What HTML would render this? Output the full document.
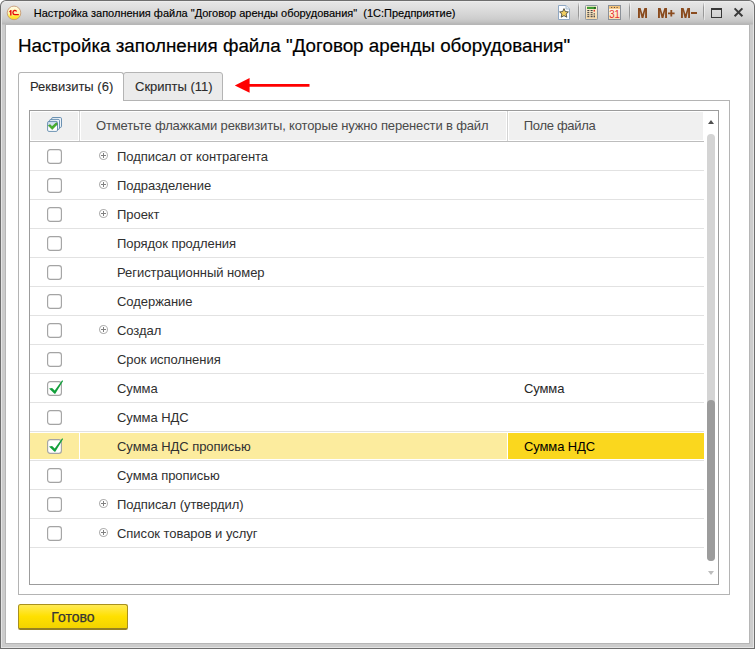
<!DOCTYPE html>
<html><head><meta charset="utf-8">
<style>
*{margin:0;padding:0;box-sizing:border-box}
html,body{width:755px;height:649px;overflow:hidden;background:#fff;font-family:"Liberation Sans",sans-serif}
.a{position:absolute}
.t{position:absolute;white-space:pre}
</style></head><body>
<div class="a" style="left:0;top:0;width:755px;height:649px;border-radius:6px 6px 0 0;background:#6e6e6e"></div>
<div class="a" style="left:1px;top:1px;width:753px;height:647px;border-radius:5px 5px 0 0;background:#e4e4e4"></div>
<div class="a" style="left:2px;top:1px;width:751px;height:646px;border-radius:5px 5px 0 0;background:linear-gradient(#f3f3f3 0px,#e6e6e6 1px,#dddddd 8px,#cdcdcd 18px,#c2c2c2 21px,#b6b6b6 23px,#cccccc 24px)"></div>
<div class="a" style="left:5px;top:24px;width:745px;height:620px;background:#b6b6b6"></div>
<div class="a" style="left:6px;top:25px;width:743px;height:618px;background:#fff"></div>
<div class="t" style="left:33.8px;top:7.69px;font-size:11px;line-height:11px;height:11px;color:#000;-webkit-text-stroke:0.15px #000">Настройка заполнения файла "Договор аренды оборудования"  (1С:Предприятие)</div>
<svg class="a" style="left:0;top:0" width="26" height="24" viewBox="0 0 26 24">
<defs><linearGradient id="lg1" x1="0" y1="0" x2="0" y2="1"><stop offset="0" stop-color="#fffbe8"/><stop offset="0.55" stop-color="#fff4a8"/><stop offset="0.75" stop-color="#ffe83a"/><stop offset="1" stop-color="#ffd820"/></linearGradient></defs>
<circle cx="14" cy="12.9" r="6.8" fill="url(#lg1)" stroke="#c69a78" stroke-width="0.9"/>
<path d="M9.2 11.4 L10.5 10 L11.5 10 L11.5 15.6 L10.1 15.6 L10.1 11.9 L9.2 12.3 Z" fill="#e60a0a"/>
<path d="M16.6 11.5 Q15.8 10.3 14.4 10.5 Q12.9 10.9 12.9 12.6 Q13 14.6 14.8 14.7 L18.8 14.7" fill="none" stroke="#e60a0a" stroke-width="1.3"/>
</svg>
<div class="t" style="left:18px;top:37.39px;font-size:18.8px;line-height:18.8px;height:18.8px;color:#000;-webkit-text-stroke:0.2px #000">Настройка заполнения файла "Договор аренды оборудования"</div>
<div class="a" style="left:18px;top:100px;width:712px;height:495px;border:1px solid #b4b4b4"></div>
<div class="a" style="left:123px;top:72px;width:100px;height:29px;border:1px solid #b4b4b4;border-radius:3px 3px 0 0;background:#ebebeb"></div>
<div class="a" style="left:18px;top:72px;width:106px;height:29px;border:1px solid #b4b4b4;border-bottom:none;border-radius:3px 3px 0 0;background:#fff"></div>
<div class="t" style="left:30px;top:79.50px;font-size:13px;line-height:13px;height:13px;color:#2a2a2a;-webkit-text-stroke:0.1px #2a2a2a">Реквизиты (6)</div>
<div class="t" style="left:135px;top:79.50px;font-size:13px;line-height:13px;height:13px;color:#2a2a2a;-webkit-text-stroke:0.1px #2a2a2a">Скрипты (11)</div>
<svg class="a" style="left:230px;top:74px" width="85" height="24" viewBox="0 0 85 24"><path d="M4.8 11.4 L19.6 4.1 L19.6 10 L79.5 10 L79.5 12.8 L19.6 12.8 L19.6 18.8 Z" fill="#ff0000"/></svg>
<div class="a" style="left:29px;top:110px;width:690px;height:475px;border:1px solid #9c9c9c"></div>
<div class="a" style="left:31px;top:112px;width:47px;height:28px;background:#f0f0f0"></div>
<div class="a" style="left:79px;top:111px;width:1px;height:30px;background:#d4d4d4"></div>
<div class="a" style="left:81px;top:112px;width:425px;height:28px;background:#f0f0f0"></div>
<div class="a" style="left:507px;top:111px;width:1px;height:30px;background:#d4d4d4"></div>
<div class="a" style="left:509px;top:112px;width:194px;height:28px;background:#f0f0f0"></div>
<div class="a" style="left:30px;top:141px;width:674px;height:1px;background:#bdbdbd"></div>
<div class="t" style="left:96px;top:119.00px;font-size:13px;line-height:13px;height:13px;color:#4a4a4a;letter-spacing:-0.14px">Отметьте флажками реквизиты, которые нужно перенести в файл</div>
<div class="t" style="left:523.8px;top:119.00px;font-size:13px;line-height:13px;height:13px;color:#4a4a4a;letter-spacing:-0.32px">Поле файла</div>
<svg class="a" style="left:46px;top:116px" width="17" height="17" viewBox="0 0 17 17">
<defs><linearGradient id="hb" x1="0" y1="0" x2="0" y2="1"><stop offset="0" stop-color="#c2d6ea"/><stop offset="0.45" stop-color="#dfeaf4"/><stop offset="0.5" stop-color="#ffffff"/><stop offset="1" stop-color="#ffffff"/></linearGradient></defs>
<rect x="5.6" y="1.5" width="9.9" height="10" rx="1.3" fill="#eef3f8" stroke="#5b86aa" stroke-width="0.9"/>
<rect x="3.6" y="3.4" width="9.9" height="10" rx="1.3" fill="#eef3f8" stroke="#5b86aa" stroke-width="0.9"/>
<rect x="1.6" y="5.4" width="9.9" height="10" rx="1.3" fill="url(#hb)" stroke="#5b86aa" stroke-width="0.9"/>
<path d="M2.2 9.6 L4.2 8.6 L6 10.6 L10.4 6.6 L11.4 8.2 L6.2 13.6 Z" fill="#47b02c" stroke="#2d8a1c" stroke-width="0.5" stroke-linejoin="round"/>
</svg>
<div class="a" style="left:30px;top:170px;width:674px;height:1px;background:#e2e2e2"></div>
<svg class="a" style="left:47px;top:149px" width="15" height="15" viewBox="0 0 15 15"><rect x="0.6" y="0.6" width="13.8" height="13.8" rx="2.6" fill="#fff" stroke="#a4a4a4" stroke-width="1.15"/></svg>
<svg class="a" style="left:98px;top:150px" width="11" height="11" viewBox="0 0 11 11"><circle cx="5.5" cy="5.5" r="4" fill="none" stroke="#b2b2b2" stroke-width="1.05"/><path d="M3 5.5 H8 M5.5 3 V8" stroke="#808080" stroke-width="1"/></svg>
<div class="t" style="left:117px;top:150.00px;font-size:13px;line-height:13px;height:13px;color:#303030;letter-spacing:-0.05px">Подписал от контрагента</div>
<div class="a" style="left:30px;top:199px;width:674px;height:1px;background:#e2e2e2"></div>
<svg class="a" style="left:47px;top:178px" width="15" height="15" viewBox="0 0 15 15"><rect x="0.6" y="0.6" width="13.8" height="13.8" rx="2.6" fill="#fff" stroke="#a4a4a4" stroke-width="1.15"/></svg>
<svg class="a" style="left:98px;top:179px" width="11" height="11" viewBox="0 0 11 11"><circle cx="5.5" cy="5.5" r="4" fill="none" stroke="#b2b2b2" stroke-width="1.05"/><path d="M3 5.5 H8 M5.5 3 V8" stroke="#808080" stroke-width="1"/></svg>
<div class="t" style="left:117px;top:179.00px;font-size:13px;line-height:13px;height:13px;color:#303030;letter-spacing:-0.05px">Подразделение</div>
<div class="a" style="left:30px;top:228px;width:674px;height:1px;background:#e2e2e2"></div>
<svg class="a" style="left:47px;top:207px" width="15" height="15" viewBox="0 0 15 15"><rect x="0.6" y="0.6" width="13.8" height="13.8" rx="2.6" fill="#fff" stroke="#a4a4a4" stroke-width="1.15"/></svg>
<svg class="a" style="left:98px;top:208px" width="11" height="11" viewBox="0 0 11 11"><circle cx="5.5" cy="5.5" r="4" fill="none" stroke="#b2b2b2" stroke-width="1.05"/><path d="M3 5.5 H8 M5.5 3 V8" stroke="#808080" stroke-width="1"/></svg>
<div class="t" style="left:117px;top:208.00px;font-size:13px;line-height:13px;height:13px;color:#303030;letter-spacing:-0.05px">Проект</div>
<div class="a" style="left:30px;top:257px;width:674px;height:1px;background:#e2e2e2"></div>
<svg class="a" style="left:47px;top:236px" width="15" height="15" viewBox="0 0 15 15"><rect x="0.6" y="0.6" width="13.8" height="13.8" rx="2.6" fill="#fff" stroke="#a4a4a4" stroke-width="1.15"/></svg>
<div class="t" style="left:117px;top:237.00px;font-size:13px;line-height:13px;height:13px;color:#303030;letter-spacing:-0.05px">Порядок продления</div>
<div class="a" style="left:30px;top:286px;width:674px;height:1px;background:#e2e2e2"></div>
<svg class="a" style="left:47px;top:265px" width="15" height="15" viewBox="0 0 15 15"><rect x="0.6" y="0.6" width="13.8" height="13.8" rx="2.6" fill="#fff" stroke="#a4a4a4" stroke-width="1.15"/></svg>
<div class="t" style="left:117px;top:266.00px;font-size:13px;line-height:13px;height:13px;color:#303030;letter-spacing:-0.05px">Регистрационный номер</div>
<div class="a" style="left:30px;top:315px;width:674px;height:1px;background:#e2e2e2"></div>
<svg class="a" style="left:47px;top:294px" width="15" height="15" viewBox="0 0 15 15"><rect x="0.6" y="0.6" width="13.8" height="13.8" rx="2.6" fill="#fff" stroke="#a4a4a4" stroke-width="1.15"/></svg>
<div class="t" style="left:117px;top:295.00px;font-size:13px;line-height:13px;height:13px;color:#303030;letter-spacing:-0.05px">Содержание</div>
<div class="a" style="left:30px;top:344px;width:674px;height:1px;background:#e2e2e2"></div>
<svg class="a" style="left:47px;top:323px" width="15" height="15" viewBox="0 0 15 15"><rect x="0.6" y="0.6" width="13.8" height="13.8" rx="2.6" fill="#fff" stroke="#a4a4a4" stroke-width="1.15"/></svg>
<svg class="a" style="left:98px;top:324px" width="11" height="11" viewBox="0 0 11 11"><circle cx="5.5" cy="5.5" r="4" fill="none" stroke="#b2b2b2" stroke-width="1.05"/><path d="M3 5.5 H8 M5.5 3 V8" stroke="#808080" stroke-width="1"/></svg>
<div class="t" style="left:117px;top:324.00px;font-size:13px;line-height:13px;height:13px;color:#303030;letter-spacing:-0.05px">Создал</div>
<div class="a" style="left:30px;top:373px;width:674px;height:1px;background:#e2e2e2"></div>
<svg class="a" style="left:47px;top:352px" width="15" height="15" viewBox="0 0 15 15"><rect x="0.6" y="0.6" width="13.8" height="13.8" rx="2.6" fill="#fff" stroke="#a4a4a4" stroke-width="1.15"/></svg>
<div class="t" style="left:117px;top:353.00px;font-size:13px;line-height:13px;height:13px;color:#303030;letter-spacing:-0.05px">Срок исполнения</div>
<div class="a" style="left:30px;top:402px;width:674px;height:1px;background:#e2e2e2"></div>
<svg class="a" style="left:47px;top:381px" width="15" height="15" viewBox="0 0 15 15"><rect x="0.6" y="0.6" width="13.8" height="13.8" rx="2.6" fill="#fff" stroke="#a4a4a4" stroke-width="1.15"/></svg>
<svg class="a" style="left:47px;top:380px" width="18" height="18" viewBox="0 0 18 18"><path d="M2 8.5 L5.1 8.0 L7.7 10.4 L15.2 0.2 L16.1 1.1 L8.3 13.7 L7.5 13.7 Z" fill="#13a03c"/></svg>
<div class="t" style="left:117px;top:382.00px;font-size:13px;line-height:13px;height:13px;color:#303030;letter-spacing:-0.05px">Сумма</div>
<div class="t" style="left:524px;top:382.00px;font-size:13px;line-height:13px;height:13px;color:#262626;letter-spacing:-0.12px">Сумма</div>
<div class="a" style="left:30px;top:431px;width:674px;height:1px;background:#e2e2e2"></div>
<svg class="a" style="left:47px;top:410px" width="15" height="15" viewBox="0 0 15 15"><rect x="0.6" y="0.6" width="13.8" height="13.8" rx="2.6" fill="#fff" stroke="#a4a4a4" stroke-width="1.15"/></svg>
<div class="t" style="left:117px;top:411.00px;font-size:13px;line-height:13px;height:13px;color:#303030;letter-spacing:-0.05px">Сумма НДС</div>
<div class="a" style="left:30px;top:433px;width:49px;height:26px;background:#fcec9e"></div>
<div class="a" style="left:80px;top:433px;width:427px;height:26px;background:#fcec9e"></div>
<div class="a" style="left:508px;top:433px;width:196px;height:26px;background:#fad71e"></div>
<div class="a" style="left:30px;top:460px;width:674px;height:1px;background:#e2e2e2"></div>
<svg class="a" style="left:47px;top:439px" width="15" height="15" viewBox="0 0 15 15"><rect x="0.6" y="0.6" width="13.8" height="13.8" rx="2.6" fill="#fff" stroke="#a4a4a4" stroke-width="1.15"/></svg>
<svg class="a" style="left:47px;top:438px" width="18" height="18" viewBox="0 0 18 18"><path d="M2 8.5 L5.1 8.0 L7.7 10.4 L15.2 0.2 L16.1 1.1 L8.3 13.7 L7.5 13.7 Z" fill="#13a03c"/></svg>
<div class="t" style="left:117px;top:440.00px;font-size:13px;line-height:13px;height:13px;color:#303030;letter-spacing:-0.05px">Сумма НДС прописью</div>
<div class="t" style="left:524px;top:440.00px;font-size:13px;line-height:13px;height:13px;color:#000;letter-spacing:-0.12px">Сумма НДС</div>
<div class="a" style="left:30px;top:489px;width:674px;height:1px;background:#e2e2e2"></div>
<svg class="a" style="left:47px;top:468px" width="15" height="15" viewBox="0 0 15 15"><rect x="0.6" y="0.6" width="13.8" height="13.8" rx="2.6" fill="#fff" stroke="#a4a4a4" stroke-width="1.15"/></svg>
<div class="t" style="left:117px;top:469.00px;font-size:13px;line-height:13px;height:13px;color:#303030;letter-spacing:-0.05px">Сумма прописью</div>
<div class="a" style="left:30px;top:518px;width:674px;height:1px;background:#e2e2e2"></div>
<svg class="a" style="left:47px;top:497px" width="15" height="15" viewBox="0 0 15 15"><rect x="0.6" y="0.6" width="13.8" height="13.8" rx="2.6" fill="#fff" stroke="#a4a4a4" stroke-width="1.15"/></svg>
<svg class="a" style="left:98px;top:498px" width="11" height="11" viewBox="0 0 11 11"><circle cx="5.5" cy="5.5" r="4" fill="none" stroke="#b2b2b2" stroke-width="1.05"/><path d="M3 5.5 H8 M5.5 3 V8" stroke="#808080" stroke-width="1"/></svg>
<div class="t" style="left:117px;top:498.00px;font-size:13px;line-height:13px;height:13px;color:#303030;letter-spacing:-0.05px">Подписал (утвердил)</div>
<div class="a" style="left:30px;top:547px;width:674px;height:1px;background:#e2e2e2"></div>
<svg class="a" style="left:47px;top:526px" width="15" height="15" viewBox="0 0 15 15"><rect x="0.6" y="0.6" width="13.8" height="13.8" rx="2.6" fill="#fff" stroke="#a4a4a4" stroke-width="1.15"/></svg>
<svg class="a" style="left:98px;top:527px" width="11" height="11" viewBox="0 0 11 11"><circle cx="5.5" cy="5.5" r="4" fill="none" stroke="#b2b2b2" stroke-width="1.05"/><path d="M3 5.5 H8 M5.5 3 V8" stroke="#808080" stroke-width="1"/></svg>
<div class="t" style="left:117px;top:527.00px;font-size:13px;line-height:13px;height:13px;color:#303030;letter-spacing:-0.05px">Список товаров и услуг</div>
<svg class="a" style="left:706px;top:118px" width="10" height="8" viewBox="0 0 10 8"><path d="M2 6 L5 2 L8 6 Z" fill="#505050"/></svg>
<div class="a" style="left:707px;top:134px;width:8px;height:427px;border-radius:4px;background:#d4d4d4"></div>
<div class="a" style="left:707px;top:400px;width:8px;height:161px;border-radius:4px;background:#9c9c9c"></div>
<svg class="a" style="left:706px;top:569px" width="10" height="8" viewBox="0 0 10 8"><path d="M2 2 L8 2 L5 6 Z" fill="#bdbdbd"/></svg>
<div class="a" style="left:18px;top:604px;width:110px;height:26px;border:1px solid #a8901e;border-bottom:2px solid #958024;border-radius:2.5px;background:linear-gradient(#ffea55,#ffe000 50%,#f2d300)"></div>
<div class="t" style="left:51.3px;top:609.95px;font-size:14px;line-height:14px;height:14px;color:#363636;-webkit-text-stroke:0.25px #363636">Готово</div>
<div class="a" style="left:578px;top:3px;width:1px;height:17px;background:linear-gradient(rgba(150,150,150,0.2),#989898 25%,#989898 75%,rgba(150,150,150,0.2))"></div>
<div class="a" style="left:579px;top:3px;width:1px;height:17px;background:rgba(255,255,255,0.45)"></div>
<div class="a" style="left:629px;top:3px;width:1px;height:17px;background:linear-gradient(rgba(150,150,150,0.2),#989898 25%,#989898 75%,rgba(150,150,150,0.2))"></div>
<div class="a" style="left:630px;top:3px;width:1px;height:17px;background:rgba(255,255,255,0.45)"></div>
<div class="a" style="left:703px;top:3px;width:1px;height:17px;background:linear-gradient(rgba(150,150,150,0.2),#989898 25%,#989898 75%,rgba(150,150,150,0.2))"></div>
<div class="a" style="left:704px;top:3px;width:1px;height:17px;background:rgba(255,255,255,0.45)"></div>
<svg class="a" style="left:557px;top:5px" width="14" height="16" viewBox="0 0 14 16">
<path d="M1.5 0.5 H9 L12.5 4 V14.5 H1.5 Z" fill="#fcfdff" stroke="#8fa7c2"/>
<path d="M9 0.5 V4 H12.5" fill="#e4ecf4" stroke="#a8bcd0"/>
<path d="M7 3.6 L8.3 6.6 L11.4 6.9 L9.1 9.0 L9.8 12.2 L7 10.6 L4.2 12.2 L4.9 9.0 L2.6 6.9 L5.7 6.6 Z" fill="#f3cf62" stroke="#4a4a40" stroke-width="0.9" stroke-linejoin="round"/>
</svg>
<svg class="a" style="left:585px;top:5px" width="13" height="15" viewBox="0 0 13 15">
<defs><linearGradient id="cg" x1="0" y1="0" x2="0" y2="1"><stop offset="0" stop-color="#fdf2dc"/><stop offset="1" stop-color="#f6d7a6"/></linearGradient></defs>
<rect x="0.5" y="0.5" width="12" height="14" rx="0.8" fill="url(#cg)" stroke="#8c96a0"/>
<rect x="2" y="1.8" width="9" height="2.2" fill="#3c9a30"/>
<rect x="9.2" y="2.2" width="1.3" height="1.4" fill="#1a3a10"/>
<g fill="#404040"><rect x="2.3" y="5" width="2" height="1.1"/><rect x="5.6" y="5" width="2" height="1.1"/><rect x="2.3" y="7.1" width="2" height="1.1"/><rect x="5.6" y="7.1" width="2" height="1.1"/><rect x="2.3" y="9.2" width="2" height="1.1"/><rect x="5.6" y="9.2" width="2" height="1.1"/><rect x="2.3" y="11.1" width="2" height="1.1"/><rect x="5.6" y="11.1" width="2" height="1.1"/><rect x="8.6" y="8.3" width="1.3" height="1.2"/><rect x="8.6" y="10.5" width="1.3" height="1.8"/></g>
<rect x="8.6" y="4.8" width="1.3" height="1.8" fill="#e02a1a"/>
</svg>
<svg class="a" style="left:608px;top:5px" width="13" height="15" viewBox="0 0 13 15">
<defs><linearGradient id="kg" x1="0" y1="0" x2="0" y2="1"><stop offset="0" stop-color="#ffffff"/><stop offset="1" stop-color="#f8dcb0"/></linearGradient></defs>
<rect x="0.5" y="0.5" width="12" height="14" fill="url(#kg)" stroke="#8a9098"/>
<rect x="1" y="1" width="11" height="2.8" fill="#f2c27a"/>
<g fill="#5a4030"><rect x="3.2" y="2" width="1" height="1"/><rect x="5.9" y="2" width="1" height="1"/><rect x="8.6" y="2" width="1" height="1"/></g>
<text x="6.6" y="13" font-family="Liberation Sans" font-size="10.5" fill="#e8302a" text-anchor="middle" transform="translate(6.6 0) scale(0.92 1) translate(-6.6 0)">31</text>
</svg>
<svg class="a" style="left:638px;top:8px" width="10" height="10" viewBox="0 0 10 10"><path d="M0 10 L0 0 L2.6 0 L4.5 6.2 L6.4 0 L9 0 L9 10 L7.1 10 L7.1 3 L5.4 10 L3.6 10 L1.9 3 L1.9 10 Z" fill="#8a4b1e"/></svg>
<svg class="a" style="left:657.6px;top:8px" width="10" height="10" viewBox="0 0 10 10"><path d="M0 10 L0 0 L2.6 0 L4.5 6.2 L6.4 0 L9 0 L9 10 L7.1 10 L7.1 3 L5.4 10 L3.6 10 L1.9 3 L1.9 10 Z" fill="#8a4b1e"/></svg>
<svg class="a" style="left:681px;top:8px" width="10" height="10" viewBox="0 0 10 10"><path d="M0 10 L0 0 L2.6 0 L4.5 6.2 L6.4 0 L9 0 L9 10 L7.1 10 L7.1 3 L5.4 10 L3.6 10 L1.9 3 L1.9 10 Z" fill="#8a4b1e"/></svg>
<svg class="a" style="left:667.5px;top:10px" width="7" height="7" viewBox="0 0 7 7"><path d="M2.4 0 H4.2 V2.5 H6.6 V4.2 H4.2 V6.6 H2.4 V4.2 H0 V2.5 H2.4 Z" fill="#8a4b1e"/></svg>
<div class="a" style="left:691px;top:12px;width:5.5px;height:2px;background:#8a4b1e"></div>
<div class="a" style="left:711px;top:8px;width:11px;height:10px;border:1px solid #383838;border-top-width:2px"></div>
<svg class="a" style="left:733px;top:7px" width="11" height="11" viewBox="0 0 11 11"><path d="M1.6 1.4 L9.4 9.2 M9.4 1.4 L1.6 9.2" stroke="#3a3a3a" stroke-width="2"/></svg>
</body></html>
